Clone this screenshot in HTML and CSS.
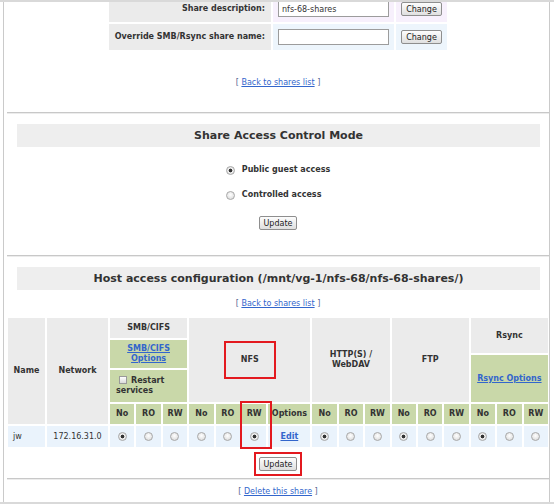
FILE: index.html
```html
<!DOCTYPE html>
<html lang="en">
<head>
  <meta charset="UTF-8" />
  <meta name="viewport" content="width=device-width, initial-scale=1.0" />
  <title>Share properties</title>
  <link rel="stylesheet" href="styles.css">
</head>
<body>
  <div class="frame">
    <table class="props">
      <tr class="row-desc">
        <th>Share description:</th>
        <td class="field"><input type="text" value="nfs-68-shares"></td>
        <td class="action"><button class="btn">Change</button></td>
      </tr>
      <tr class="row-override">
        <th>Override SMB/Rsync share name:</th>
        <td class="field"><input type="text"></td>
        <td class="action"><button class="btn">Change</button></td>
      </tr>
    </table>
    <p class="nav top-nav">[ <a href="#">Back to shares list</a> ]</p>

    <hr>

    <section class="mode">
      <h2 class="bar">Share Access Control Mode</h2>
      <div class="choices">
        <label><input type="radio" name="mode" checked> Public guest access</label>
        <label><input type="radio" name="mode"> Controlled access</label>
      </div>
      <div class="submit"><button class="btn">Update</button></div>
    </section>

    <hr>

    <section class="hosts">
      <h2 class="bar">Host access configuration (/mnt/vg-1/nfs-68/nfs-68-shares/)</h2>
      <p class="nav">[ <a href="#">Back to shares list</a> ]</p>
      <table class="acl">
        <colgroup>
          <col class="c-name">
          <col class="c-net">
          <col span="6">
          <col class="c-opt">
          <col span="9">
        </colgroup>
        <tr class="r1">
          <th rowspan="5">Name</th>
          <th rowspan="5">Network</th>
          <th colspan="3">SMB/CIFS</th>
          <th colspan="4" rowspan="4"><span class="mark nfs">NFS</span></th>
          <th colspan="3" rowspan="4">HTTP(S) / WebDAV</th>
          <th colspan="3" rowspan="4">FTP</th>
          <th colspan="3" rowspan="2">Rsync</th>
        </tr>
        <tr class="r2">
          <td colspan="3" rowspan="2" class="opt"><a href="#">SMB/CIFS Options</a></td>
        </tr>
        <tr class="r3">
          <td colspan="3" rowspan="2" class="opt"><a href="#">Rsync Options</a></td>
        </tr>
        <tr class="r4">
          <td colspan="3" class="opt restart"><label><input type="checkbox">Restart services</label></td>
        </tr>
        <tr class="r5 sub">
          <th>No</th><th>RO</th><th>RW</th>
          <th>No</th><th>RO</th><th class="hit">RW</th><th>Options</th>
          <th>No</th><th>RO</th><th>RW</th>
          <th>No</th><th>RO</th><th>RW</th>
          <th>No</th><th>RO</th><th>RW</th>
        </tr>
        <tr class="r6 data">
          <td class="name">jw</td>
          <td>172.16.31.0</td>
          <td><input type="radio" name="smb" checked></td>
          <td><input type="radio" name="smb"></td>
          <td><input type="radio" name="smb"></td>
          <td><input type="radio" name="nfs"></td>
          <td><input type="radio" name="nfs"></td>
          <td><input type="radio" name="nfs" checked></td>
          <td><a class="edit" href="#">Edit</a></td>
          <td><input type="radio" name="http" checked></td>
          <td><input type="radio" name="http"></td>
          <td><input type="radio" name="http"></td>
          <td><input type="radio" name="ftp" checked></td>
          <td><input type="radio" name="ftp"></td>
          <td><input type="radio" name="ftp"></td>
          <td><input type="radio" name="rsync" checked></td>
          <td><input type="radio" name="rsync"></td>
          <td><input type="radio" name="rsync"></td>
        </tr>
      </table>
      <div class="submit boxed"><span class="mark"><button class="btn">Update</button></span></div>
    </section>

    <hr>

    <p class="nav">[ <a href="#">Delete this share</a> ]</p>
  </div>
  <div class="bottom"></div>
</body>
</html>
```

FILE: styles.css
```css
body {
  margin: 0;
  border-top: 2px solid #d9d9d9;
  font-family: "DejaVu Sans", sans-serif;
  font-size: 8px;
  line-height: 10px;
  color: #333;
  background: #fff;
}
a {
  color: #3366cc;
}
.frame {
  margin: 0 4px 0 3px;
  border-left: 1px solid #cacaca;
  border-right: 1px solid #cacaca;
  padding: 0 0 4px 3px;
  overflow: hidden;
}
.bottom {
  height: 2px;
  background: #d9d9d9;
}
hr {
  margin: 25px 0 0;
  height: 0;
  border: 0;
  border-top: 1px solid #c8c8c8;
  border-bottom: 1px solid #ececec;
}
.nav {
  margin: 23px 0 0;
  text-align: center;
  line-height: 12px;
  color: #55648f;
}
.top-nav {
  margin-top: 25px;
}
.top-nav + hr {
  margin-top: 23px;
}

/* share properties */
.props {
  margin: -8px auto 0;
  border-spacing: 2px;
}
.props th,
.props td {
  height: 26px;
  padding: 0;
}
.props th {
  width: 156px;
  padding-right: 6px;
  text-align: right;
  background: #ebebeb;
}
.props .field {
  width: 121px;
}
.props .action {
  width: 51px;
  text-align: center;
}
.row-desc td {
  background: #f7f0fc;
}
.row-override td {
  background: #edf5fc;
}
.props input {
  display: block;
  margin: 0 auto;
  width: 111px;
  height: 16px;
  box-sizing: border-box;
  padding: 0 3px;
  border: 1px solid #9c9c9c;
  font: 8px "DejaVu Sans", sans-serif;
  color: #333;
}
.btn {
  height: 14px;
  padding: 0 4px;
  border: 1px solid #8e8e8e;
  border-radius: 2px;
  background: linear-gradient(#fdfdfd, #dfdfdf);
  font: 8px "DejaVu Sans", sans-serif;
  color: #222;
}

/* section headings */
.bar {
  margin: 10px 9px 0 10px;
  height: 23px;
  line-height: 23px;
  background: #eeeeee;
  font-size: 11px;
  font-weight: bold;
  text-align: center;
  color: #333;
}
.choices {
  width: fit-content;
  margin: 16px auto 0;
  display: flex;
  flex-direction: column;
  gap: 11px;
}
.choices label {
  display: flex;
  align-items: center;
  gap: 7px;
  height: 14px;
  font-weight: bold;
}
.submit {
  display: flex;
  justify-content: center;
  margin-top: 14px;
}
.submit.boxed {
  margin-top: 3px;
}
.hosts + hr {
  margin-top: 2px;
}
.hosts + hr + .nav {
  margin-top: 6px;
}
.hosts .nav {
  margin-top: 8px;
}

/* radios and checkbox */
input[type="radio"] {
  appearance: none;
  width: 9px;
  height: 9px;
  margin: 0;
  border: 1px solid #a8a8a8;
  border-radius: 50%;
  background: radial-gradient(circle at 50% 40%, #ffffff, #d6d6d6);
  vertical-align: middle;
}
input[type="radio"]:checked {
  background: radial-gradient(circle, #333 0 1.6px, #f2f2f2 2.2px, #d2d2d2 100%);
}
input[type="checkbox"] {
  appearance: none;
  width: 8px;
  height: 8px;
  margin: 0 4px 0 3px;
  border: 1px solid #9a9a9a;
  background: linear-gradient(#ffffff, #dadada);
  vertical-align: -1px;
}

/* host access table */
.acl {
  margin: 6px -1px 0;
  width: 544px;
  table-layout: fixed;
  border-spacing: 2px;
}
.c-name { width: 37px; }
.c-net { width: 61px; }
.c-opt { width: 42px; }
.acl th,
.acl td {
  padding: 0;
  text-align: center;
  vertical-align: middle;
}
.acl th {
  background: #ebebeb;
}
.r1 { height: 20px; }
.r2 { height: 13px; }
.r3 { height: 13px; }
.r4 { height: 32px; }
.r5 { height: 20px; }
.r6 { height: 21px; }
.acl .opt {
  background: #c9d8a9;
  font-weight: bold;
}
.acl .restart {
  text-align: left;
  padding-left: 6px;
}
.acl .sub th {
  background: #c9d8a9;
}
.acl .data td {
  background: #eaf3fc;
}
.acl .data .name {
  text-align: left;
  padding-left: 5px;
}
.edit {
  font-weight: bold;
}

/* red highlight marks */
.mark {
  display: inline-block;
  border: 2px solid #e3191f;
  padding: 3px;
  line-height: 0;
}
.mark.nfs {
  padding: 12px 15px;
  line-height: 10px;
}
.hit {
  position: relative;
}
.hit::after {
  content: "";
  position: absolute;
  left: -2px;
  top: -3px;
  width: 32px;
  height: 48px;
  box-sizing: border-box;
  border: 2px solid #e3191f;
}
```
